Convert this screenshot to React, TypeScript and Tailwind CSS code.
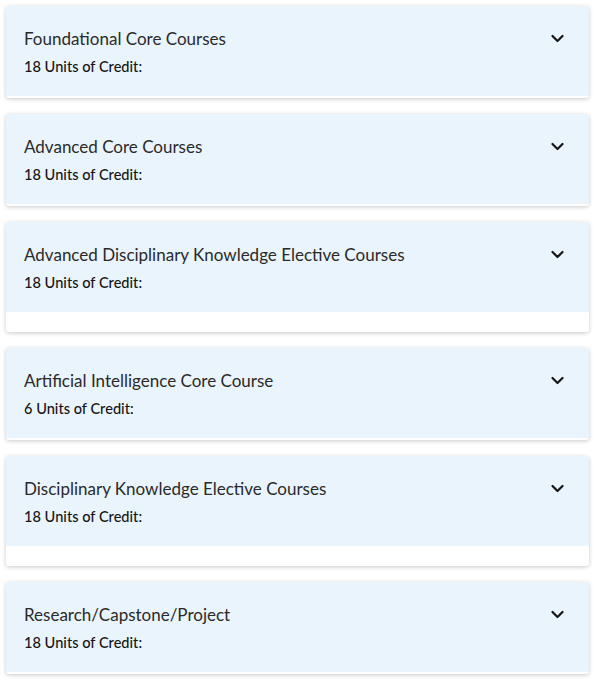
import React from 'react';

type Section = {
  title: string;
  units: number;
  // some sections render an empty body strip under the header
  hasBody?: boolean;
};

const SECTIONS: Section[] = [
  { title: 'Foundational Core Courses', units: 18 },
  { title: 'Advanced Core Courses', units: 18 },
  { title: 'Advanced Disciplinary Knowledge Elective Courses', units: 18, hasBody: true },
  { title: 'Artificial Intelligence Core Course', units: 6 },
  { title: 'Disciplinary Knowledge Elective Courses', units: 18, hasBody: true },
  { title: 'Research/Capstone/Project', units: 18 },
];

const Chevron = () => (
  <svg width="13" height="9" viewBox="0 0 13 9" fill="none">
    <path d="M1.5 2 L6.5 7 L11.5 2" stroke="#161616" strokeWidth="2.2" strokeLinecap="round" strokeLinejoin="round" />
  </svg>
);

const SectionCard = ({ section }: { section: Section }) => (
  <div className="bg-white rounded-[3px] shadow-[0_1px_4px_rgba(0,0,0,0.22)] overflow-hidden">
    <div className="bg-[#eaf4fc] h-[90px] flex justify-between pl-[18px] pr-[25px] pt-[22px]">
      <div className="flex flex-col">
        <span className="text-[17px] leading-[22px] text-[#2a2a2a]">{section.title}</span>
        <span className="text-[14.6px] leading-[18px] mt-[8px] font-medium text-[#161616]">
          {section.units} Units of Credit:
        </span>
      </div>
      <div className="pt-[6px]">
        <Chevron />
      </div>
    </div>
    <div className={section.hasBody ? 'h-[20px]' : 'h-[2px]'} />
  </div>
);

export default function App() {
  return (
    <div className="bg-white min-h-screen px-[6px] pt-[6px] flex flex-col gap-[16px] w-[595px]" style={{ fontFamily: 'Lato, "Open Sans", sans-serif' }}>
      {SECTIONS.map((s) => (
        <SectionCard key={s.title} section={s} />
      ))}
    </div>
  );
}
